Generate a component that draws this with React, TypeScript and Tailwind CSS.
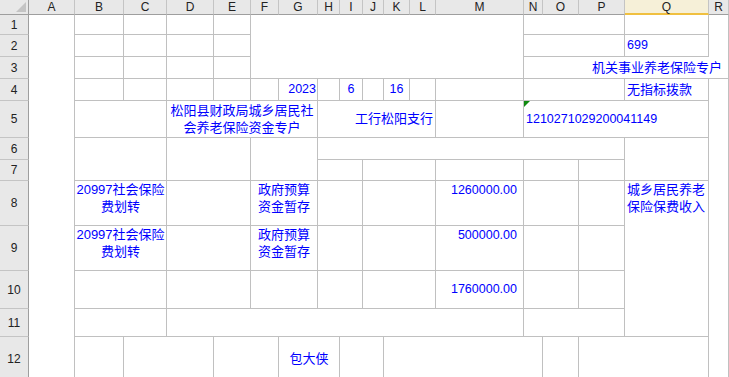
import React from 'react';

// spreadsheet screenshot: grid with merged cells
const Cell = ({ className = '', children }: { className?: string; children?: React.ReactNode }) => (
  <div className={`relative flex min-w-0 overflow-hidden border-r border-b border-[#c0c0c0] text-[#0000ff] ${className}`}>
    {children}
  </div>
);

const colHeads = [
  { l: 'A', c: 'col-start-2' },
  { l: 'B', c: 'col-start-3' },
  { l: 'C', c: 'col-start-4' },
  { l: 'D', c: 'col-start-5' },
  { l: 'E', c: 'col-start-6' },
  { l: 'F', c: 'col-start-7' },
  { l: 'G', c: 'col-start-8' },
  { l: 'H', c: 'col-start-9' },
  { l: 'I', c: 'col-start-10' },
  { l: 'J', c: 'col-start-11' },
  { l: 'K', c: 'col-start-12' },
  { l: 'L', c: 'col-start-13' },
  { l: 'M', c: 'col-start-14' },
  { l: 'N', c: 'col-start-15' },
  { l: 'O', c: 'col-start-16' },
  { l: 'P', c: 'col-start-17' },
  { l: 'Q', c: 'col-start-18' },
  { l: 'R', c: 'col-start-19' },
];

const rowHeads = [
  { n: 1, r: 'row-start-2' },
  { n: 2, r: 'row-start-3' },
  { n: 3, r: 'row-start-4' },
  { n: 4, r: 'row-start-5' },
  { n: 5, r: 'row-start-6' },
  { n: 6, r: 'row-start-7' },
  { n: 7, r: 'row-start-8' },
  { n: 8, r: 'row-start-9' },
  { n: 9, r: 'row-start-10' },
  { n: 10, r: 'row-start-11' },
  { n: 11, r: 'row-start-12' },
  { n: 12, r: 'row-start-13' },
];

const topRows = ['row-start-2', 'row-start-3', 'row-start-4', 'row-start-5'];

const bodyRows = [
  { r: 'row-start-9', item: true, amount: '1260000.00' },
  { r: 'row-start-10', item: true, amount: '500000.00' },
  { r: 'row-start-11', item: false, amount: '1760000.00' },
];

const Item = ({ lines }: { lines: string[] }) => (
  <div className="w-full text-center text-[13px] leading-[17px]">
    {lines.map((t) => (
      <div key={t}>{t}</div>
    ))}
  </div>
);

export default function App() {
  return (
    <div className="w-[729px] h-[377px] overflow-hidden bg-white font-['Liberation_Sans','Noto_Sans_CJK_SC',sans-serif]">
      <div className="grid grid-cols-[29px_46px_49px_43px_47px_37px_28px_39px_22px_23px_21px_26px_26px_88px_19px_36px_46px_84px_20px] grid-rows-[15px_20px_22px_22px_22px_37px_22px_21px_45px_45px_38px_28px_45px]">
        {/* corner */}
        <div className="relative col-start-1 row-start-1 bg-[#e8e8e8] border-r border-b border-r-[#9e9e9e] border-b-[#9e9e9e]">
          <svg className="absolute right-[2px] bottom-[2px]" width="10" height="10" viewBox="0 0 10 10">
            <path d="M10 0 L10 10 L0 10 Z" fill="#c4c4c4" />
          </svg>
        </div>

        {colHeads.map((h) => (
          <div
            key={h.l}
            className={`${h.c} row-start-1 flex items-center justify-center border-r border-r-[#c4c4c4] text-[12px] leading-none text-[#222] ${
              h.l === 'Q'
                ? 'bg-[#f6f0d8] border-b-2 border-b-[#f0c040]'
                : 'bg-[#e8e8e8] border-b border-b-[#9e9e9e]'
            }`}
          >
            {h.l}
          </div>
        ))}

        {rowHeads.map((h) => (
          <div
            key={h.n}
            className={`col-start-1 ${h.r} flex items-center justify-center bg-[#e8e8e8] border-r border-b border-r-[#9e9e9e] border-b-[#c4c4c4] text-[12px] leading-none text-[#222]`}
          >
            {h.n}
          </div>
        ))}

        {/* column A */}
        <div className="col-start-2 row-start-2 row-span-12 border-r border-[#c0c0c0]" />

        {/* rows 1-4, B:E */}
        {topRows.map((r) => (
          <React.Fragment key={r}>
            <Cell className={`col-start-3 ${r}`} />
            <Cell className={`col-start-4 ${r}`} />
            <Cell className={`col-start-5 ${r}`} />
            <Cell className={`col-start-6 ${r}`} />
          </React.Fragment>
        ))}

        {/* F1:M3 */}
        <Cell className="col-start-7 col-span-8 row-start-2 row-span-3" />

        {/* N:R rows 1-3 */}
        <Cell className="col-start-15 col-span-3 row-start-2" />
        <Cell className="col-start-18 row-start-2" />
        <Cell className="col-start-15 col-span-3 row-start-3" />
        <Cell className="col-start-18 row-start-3 items-center pl-[2px] text-[12.5px]">699</Cell>
        <div className="col-start-19 row-start-2 row-span-2 border-r border-[#c0c0c0]" />
        <Cell className="col-start-15 col-span-5 row-start-4 items-center justify-end pr-[6px] text-[13px] whitespace-nowrap">
          机关事业养老保险专户
        </Cell>

        {/* row 4 */}
        <Cell className="col-start-7 row-start-5" />
        <Cell className="col-start-8 row-start-5 items-center justify-end pr-[1px] text-[12.5px]">2023</Cell>
        <Cell className="col-start-9 row-start-5" />
        <Cell className="col-start-10 row-start-5 items-center justify-center text-[12.5px]">6</Cell>
        <Cell className="col-start-11 row-start-5" />
        <Cell className="col-start-12 row-start-5 items-center justify-center text-[12.5px]">16</Cell>
        <Cell className="col-start-13 row-start-5" />
        <Cell className="col-start-14 row-start-5" />
        <Cell className="col-start-15 col-span-3 row-start-5" />
        <Cell className="col-start-18 row-start-5 items-center pl-[2px] text-[13px] whitespace-nowrap">无指标拨款</Cell>
        <div className="col-start-19 row-start-5 row-span-9 border-r border-[#c0c0c0]" />

        {/* row 5 */}
        <Cell className="col-start-3 col-span-2 row-start-6" />
        <Cell className="col-start-5 col-span-4 row-start-6 items-center">
          <Item lines={['松阳县财政局城乡居民社', '会养老保险资金专户']} />
        </Cell>
        <Cell className="col-start-9 col-span-5 row-start-6 items-center justify-end pr-[2px] text-[13px] whitespace-nowrap">
          工行松阳支行
        </Cell>
        <Cell className="col-start-14 row-start-6" />
        <Cell className="col-start-15 col-span-4 row-start-6 items-center pl-[2px] text-[12.5px]">
          <span className="absolute left-0 top-0 h-0 w-0 border-t-[6px] border-r-[6px] border-t-[#108a10] border-r-transparent" />
          1210271029200041149
        </Cell>

        {/* rows 6-7 */}
        <Cell className="col-start-3 col-span-2 row-start-7 row-span-2" />
        <Cell className="col-start-5 col-span-2 row-start-7 row-span-2" />
        <Cell className="col-start-7 col-span-2 row-start-7 row-span-2" />
        <Cell className="col-start-9 col-span-9 row-start-7" />
        <Cell className="col-start-18 row-start-7 row-span-2" />
        <Cell className="col-start-9 col-span-2 row-start-8" />
        <Cell className="col-start-11 col-span-3 row-start-8" />
        <Cell className="col-start-14 row-start-8" />
        <Cell className="col-start-15 col-span-2 row-start-8" />
        <Cell className="col-start-17 row-start-8" />

        {/* rows 8-10 */}
        {bodyRows.map((b) => (
          <React.Fragment key={b.r}>
            <Cell className={`col-start-3 col-span-2 ${b.r} items-start`}>
              {b.item && <Item lines={['20997社会保险', '费划转']} />}
            </Cell>
            <Cell className={`col-start-5 col-span-2 ${b.r}`} />
            <Cell className={`col-start-7 col-span-2 ${b.r} items-start`}>
              {b.item && <Item lines={['政府预算', '资金暂存']} />}
            </Cell>
            <Cell className={`col-start-9 col-span-2 ${b.r}`} />
            <Cell className={`col-start-11 col-span-3 ${b.r}`} />
            <Cell
              className={`col-start-14 ${b.r} justify-end pr-[6px] text-[12.5px] leading-[17px] ${
                b.item ? 'items-start pt-[1px]' : 'items-center'
              }`}
            >
              {b.amount}
            </Cell>
            <Cell className={`col-start-15 col-span-2 ${b.r}`} />
            <Cell className={`col-start-17 ${b.r}`} />
          </React.Fragment>
        ))}

        {/* Q8:Q11 */}
        <Cell className="col-start-18 row-start-9 row-span-4 items-start pl-[2px] text-[13px] leading-[17px]">
          <div>
            <div>城乡居民养老</div>
            <div>保险保费收入</div>
          </div>
        </Cell>

        {/* row 11 */}
        <Cell className="col-start-3 col-span-2 row-start-12" />
        <Cell className="col-start-5 col-span-10 row-start-12" />
        <Cell className="col-start-15 col-span-3 row-start-12" />

        {/* row 12 */}
        <Cell className="col-start-3 row-start-13" />
        <Cell className="col-start-4 col-span-2 row-start-13" />
        <Cell className="col-start-6 col-span-2 row-start-13" />
        <Cell className="col-start-8 col-span-2 row-start-13 items-center justify-center text-[13px]">包大侠</Cell>
        <Cell className="col-start-10 col-span-2 row-start-13" />
        <Cell className="col-start-12 col-span-4 row-start-13" />
        <Cell className="col-start-16 row-start-13" />
        <Cell className="col-start-17 col-span-2 row-start-13" />
      </div>
    </div>
  );
}
